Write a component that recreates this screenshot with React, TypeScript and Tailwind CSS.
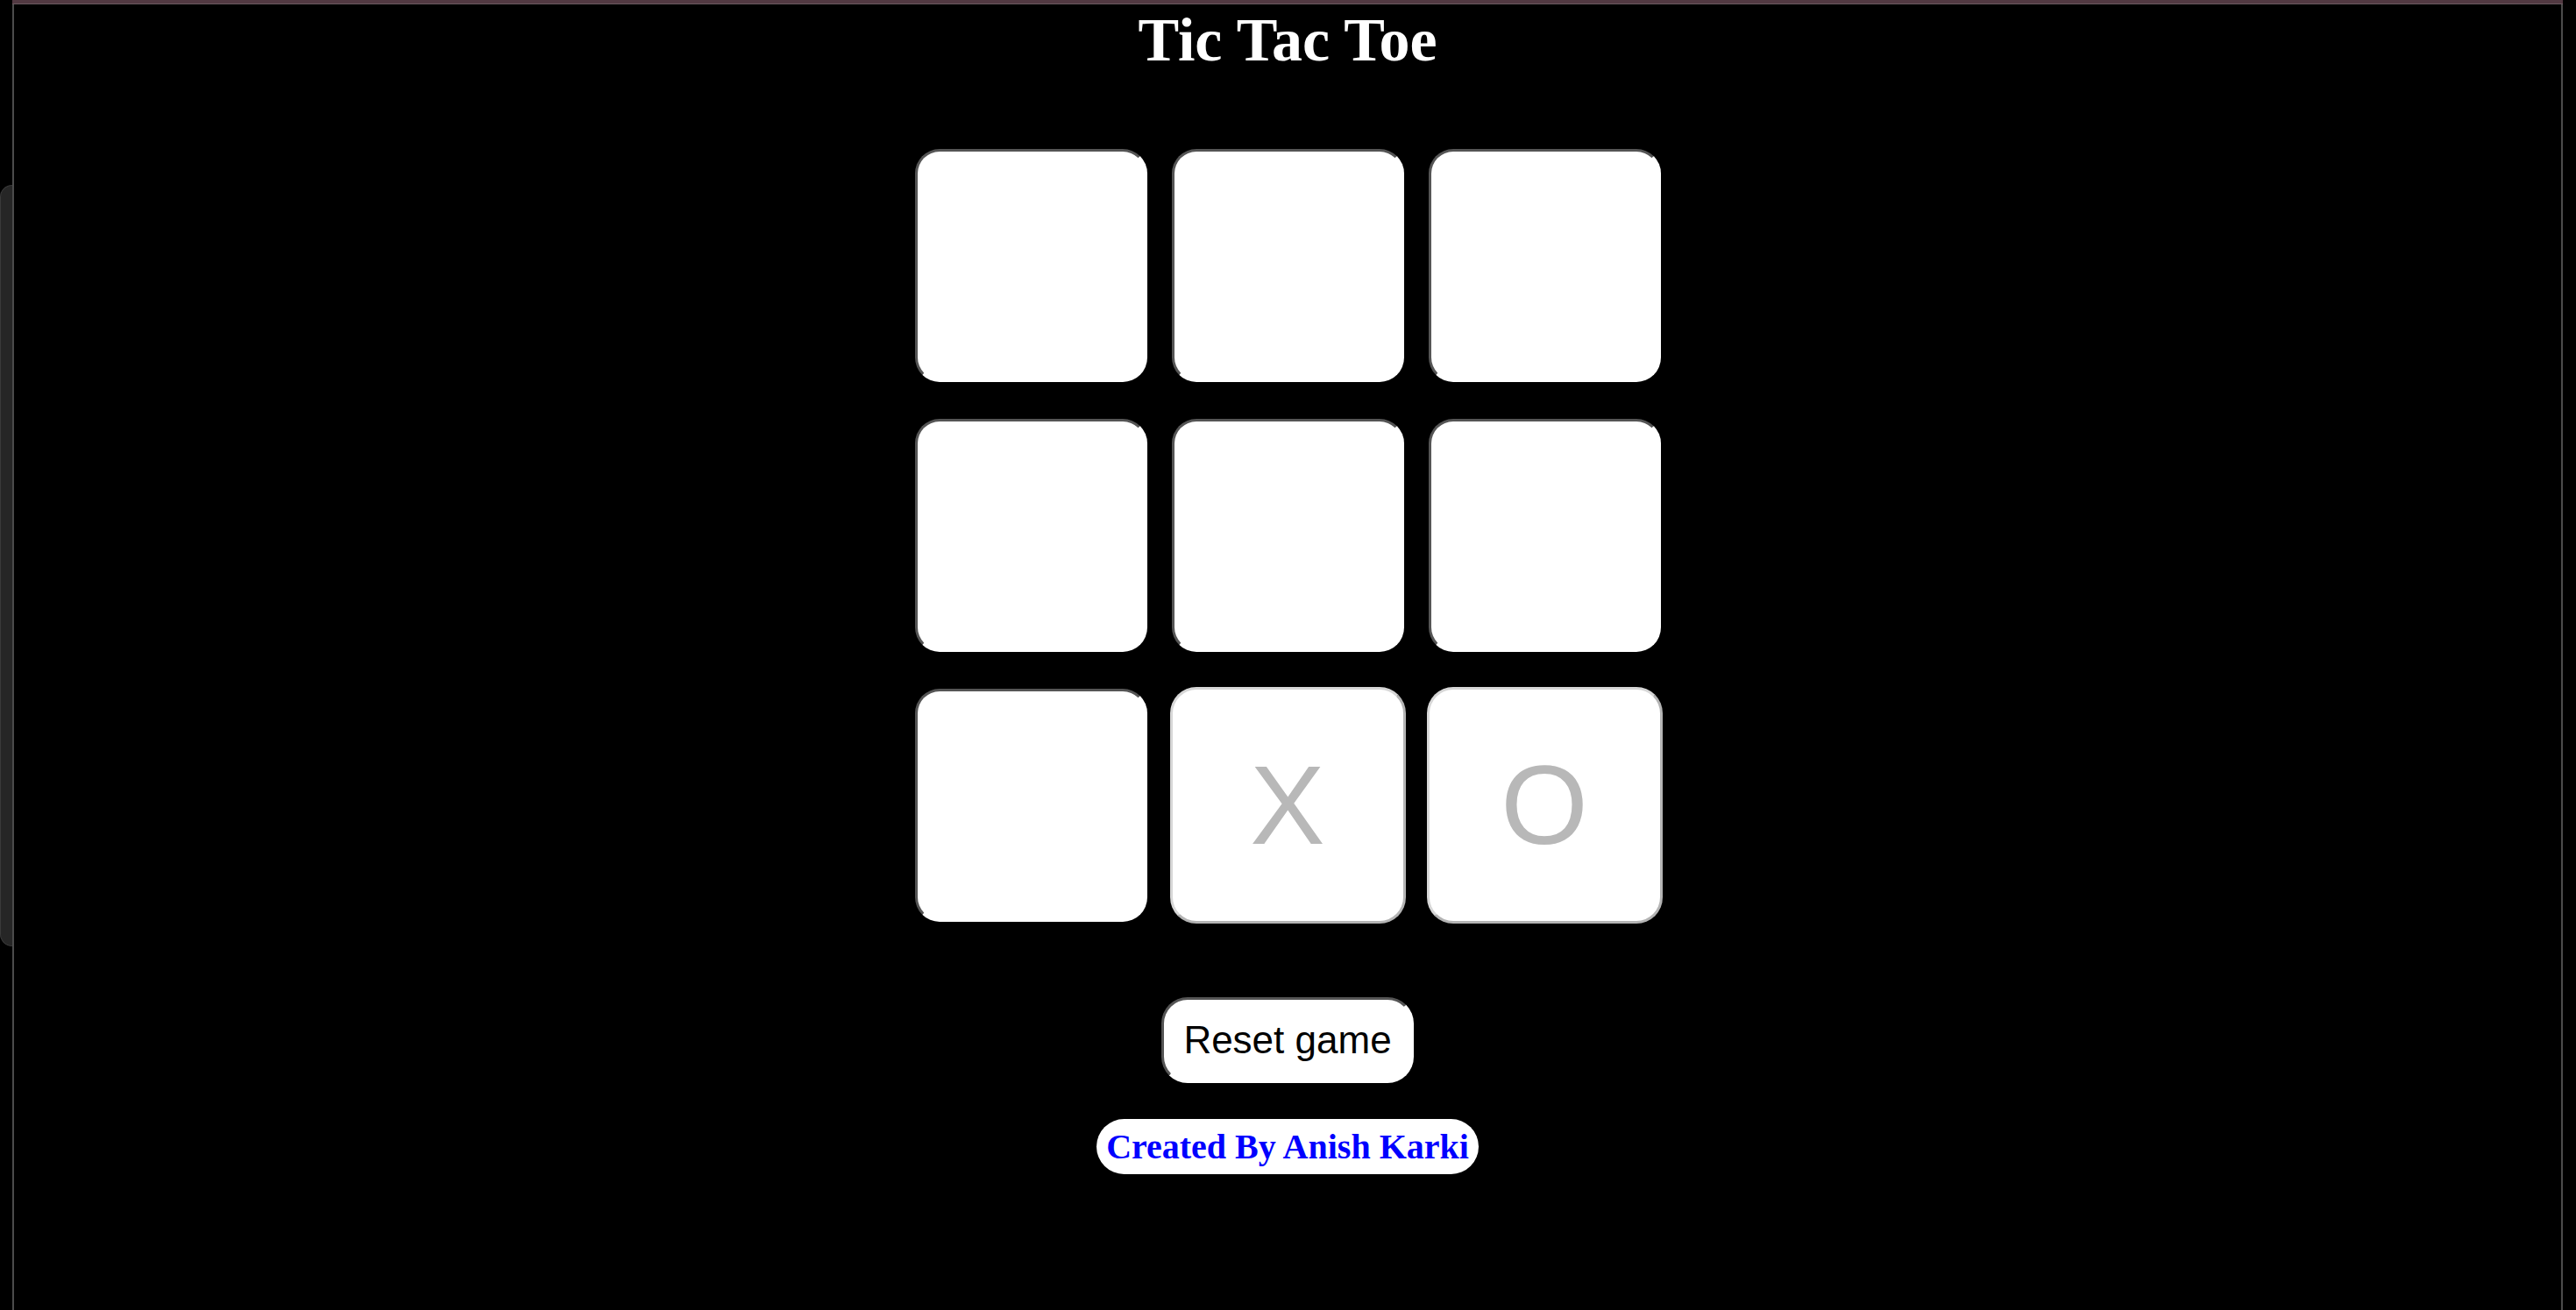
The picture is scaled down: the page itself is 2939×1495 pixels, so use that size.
const board = ["", "", "", "", "", "", "", "X", "O"];

const serif = { fontFamily: "'Liberation Serif', 'Times New Roman', serif" };

function Cell({ value }: { value: string }) {
  if (value) {
    return (
      <button
        disabled
        className="-m-[2px] w-[269px] h-[270px] flex items-center justify-center rounded-[30px] bg-white border-[3px] border-t-[#d7d7d7] border-l-[#d7d7d7] border-r-[#b4b4b4] border-b-[#b4b4b4] text-[128px] leading-none text-[#b8b8b8] font-['Liberation_Sans',Arial,sans-serif]"
      >
        {value}
      </button>
    );
  }
  return (
    <button className="w-[265px] h-[266px] rounded-[28px] bg-white border-[3px] border-t-[#555555] border-l-[#555555] border-r-white border-b-white" />
  );
}

export default function App() {
  return (
    <div className="flex min-h-screen w-full bg-black">
      {/* left window edge with the dark side tab */}
      <div className="w-[14px] shrink-0">
        <div className="mt-[211px] h-[869px] rounded-l-[14px] bg-[#262626] border border-r-0 border-[#3a3a3a]" />
      </div>

      <div className="flex flex-1 flex-col">
        <div className="h-[4px] bg-[#523942] border-b border-[#6b5a60] box-content" />
        <div className="flex flex-1">
          <div className="w-[2px] bg-[#4b4b4b]" />
          <main className="flex flex-1 flex-col items-center">
            <h1 className="mt-[1px] text-[70px] font-bold leading-[normal] text-white" style={serif}>
              Tic Tac Toe
            </h1>

            <div className="mt-[84px] grid grid-cols-[repeat(3,265px)] gap-x-[28px] gap-y-[42px]">
              {board.map((v, i) => (
                <Cell key={i} value={v} />
              ))}
            </div>

            <button className="mt-[86px] rounded-[30px] bg-white border-[3px] border-t-[#555555] border-l-[#555555] border-r-white border-b-white px-[22px] py-[21px] text-[44px] leading-[normal] text-black font-['Liberation_Sans',Arial,sans-serif]">
              Reset game
            </button>

            <h3
              className="mt-[41px] rounded-full bg-white px-[11px] py-[8px] text-[40px] font-bold leading-[normal] text-[#0000ff]"
              style={serif}
            >
              Created By Anish Karki
            </h3>
          </main>
          <div className="w-[2px] bg-[#4b4b4b]" />
        </div>
      </div>

      <div className="w-[15px] shrink-0" />
    </div>
  );
}
